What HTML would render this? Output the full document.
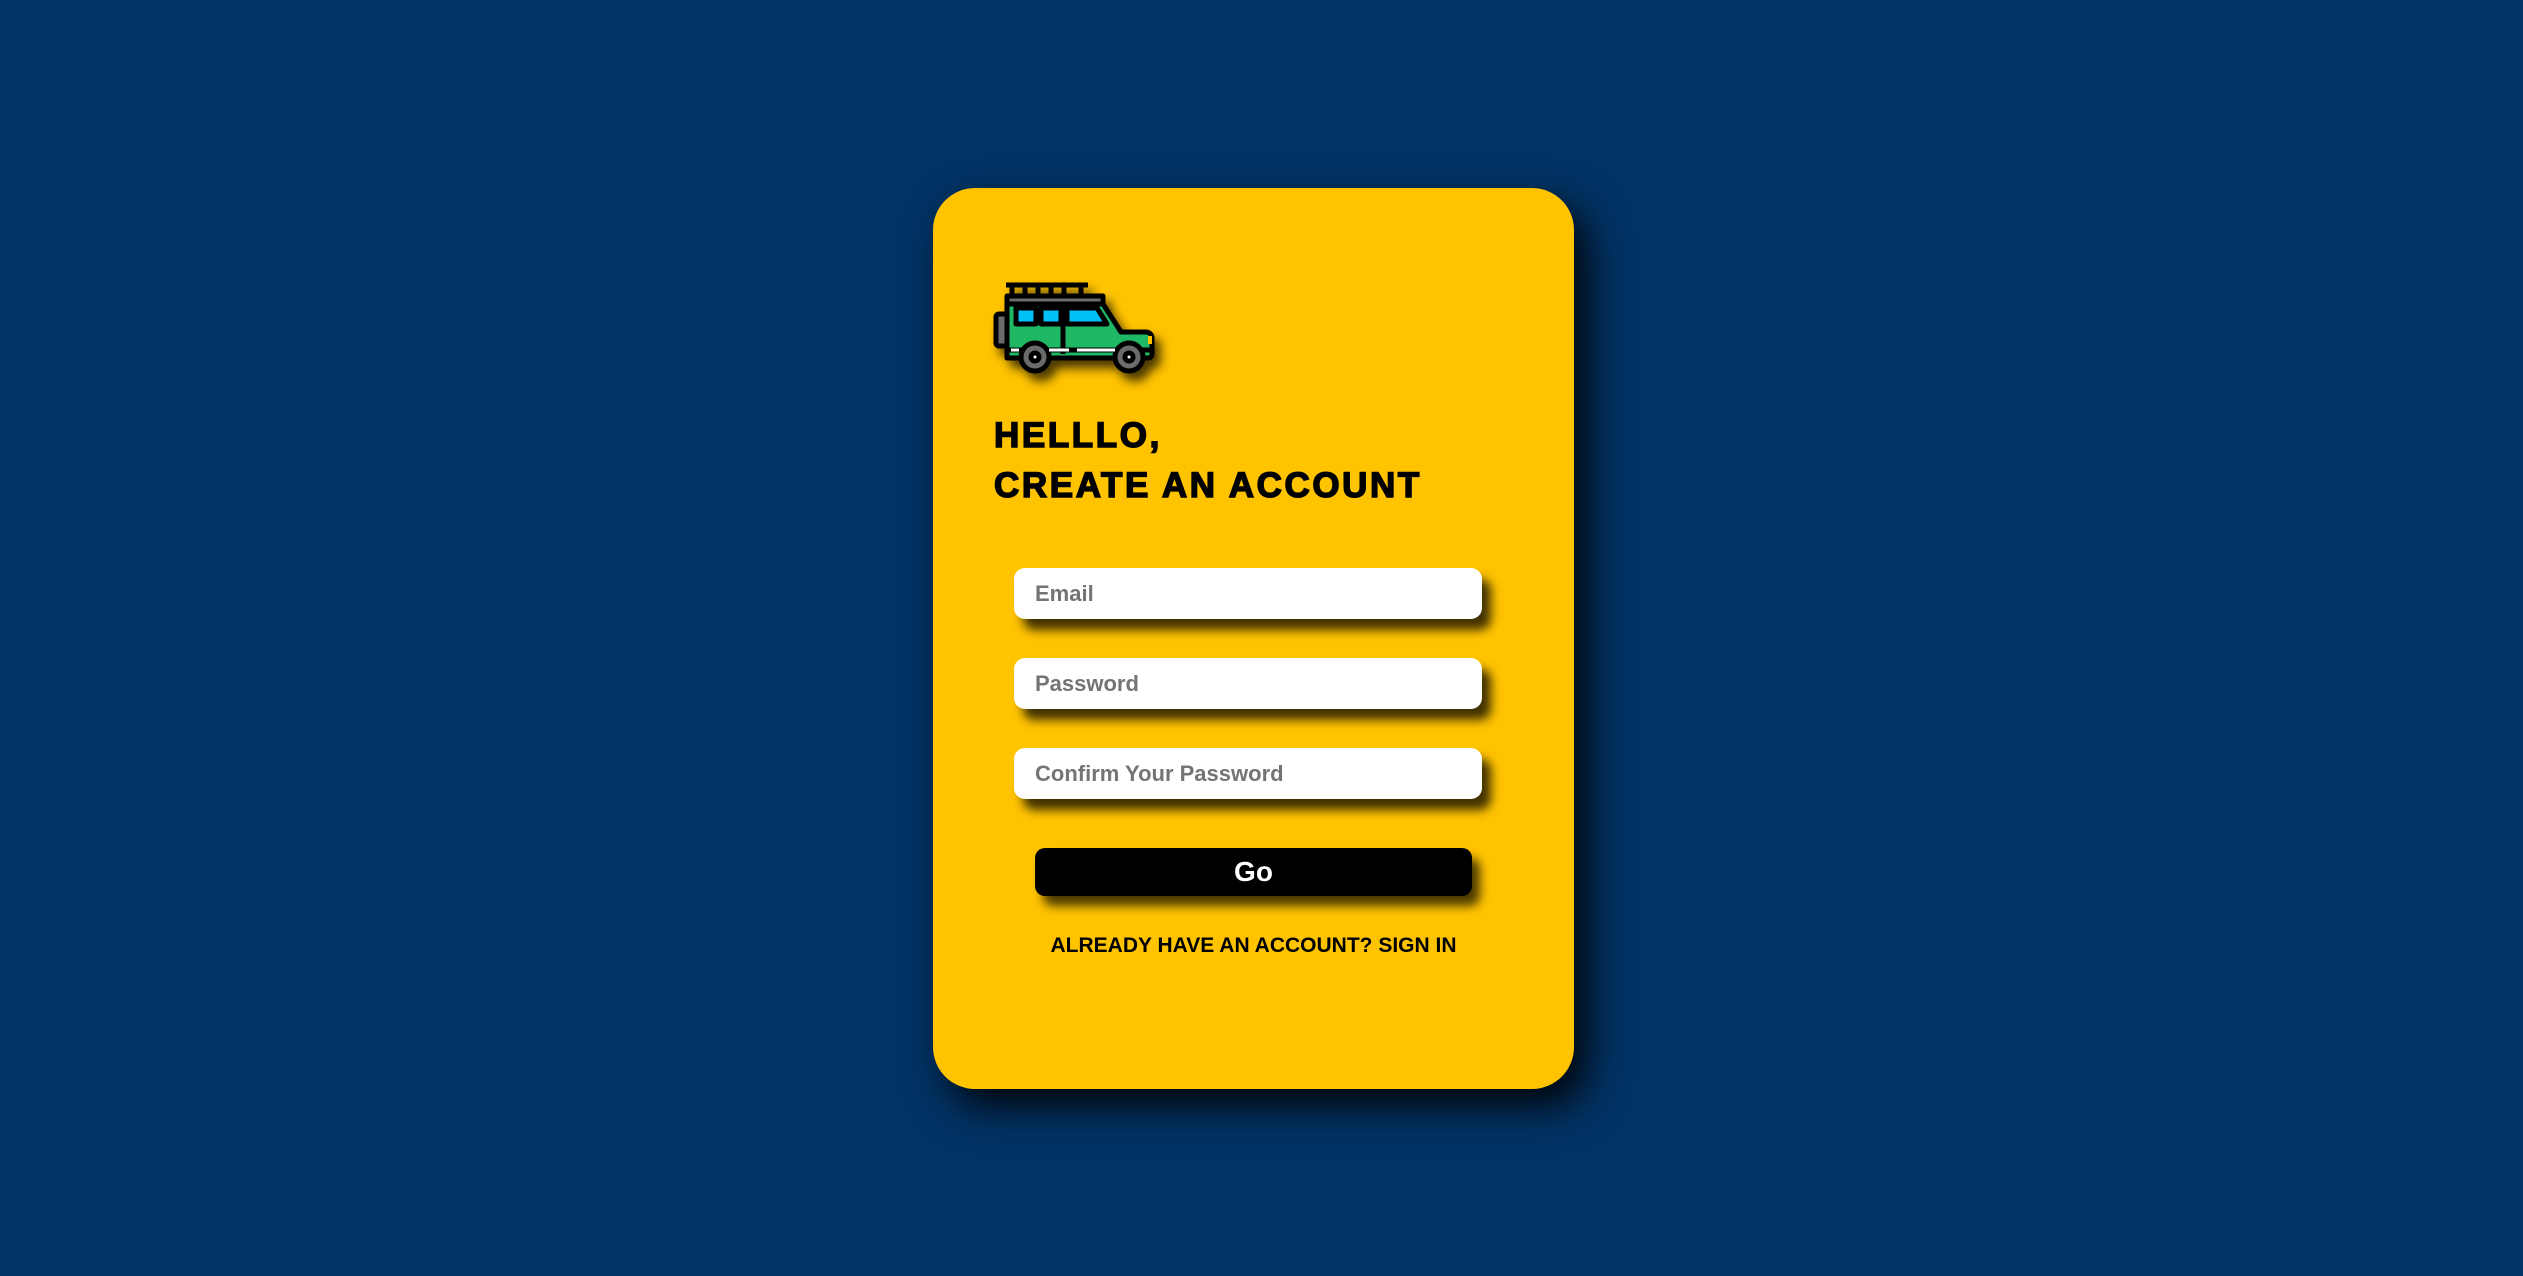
<!DOCTYPE html>
<html><head><meta charset="utf-8"><style>
html,body{margin:0;padding:0;width:2523px;height:1276px;background:#023365;overflow:hidden;font-family:"Liberation Sans",Arial,sans-serif}
.card{position:absolute;left:933px;top:188px;width:641px;height:901px;background:#ffc300;border-radius:42px;box-shadow:14px 18px 40px rgba(0,0,0,.9)}
.jeep{position:absolute;left:993px;top:282px;width:164px;height:96px;filter:drop-shadow(6px 8px 5px rgba(0,0,0,.7))}
h1{position:absolute;left:994px;top:411px;margin:0;font-size:35px;line-height:50px;font-weight:900;color:#000;-webkit-text-stroke:1.5px #000;letter-spacing:2.6px}
.in{position:absolute;left:1014px;width:468px;height:51px;background:#fff;border-radius:11px;box-shadow:9px 11px 10px rgba(0,0,0,.75);font-size:22px;font-weight:bold;color:#747474;line-height:51px;padding-left:21px;box-sizing:border-box}
.btn{position:absolute;left:1035px;top:848px;width:437px;height:48px;background:#000;border-radius:10px;box-shadow:8px 10px 10px rgba(0,0,0,.7);color:#fff;font-weight:bold;font-size:28px;text-align:center;line-height:48px}
.link{position:absolute;left:933px;width:641px;top:934px;text-align:center;font-size:21px;font-weight:bold;color:#000}
</style></head><body>
<div class="card"></div>
<svg class="jeep" viewBox="0 0 164 96">
<g stroke="#000" stroke-width="5" stroke-linejoin="round">
<path d="M13 3H95" />
<path d="M19 3v11M32 3v11M45 3v11M58 3v11M71 3v11M88 3v11"/>
<rect x="14" y="14" width="96" height="8" fill="#6b6b6b"/>
<path d="M14 22H110l18 28h25a6 6 0 0 1 6 6v16a4 4 0 0 1-4 4H14z" fill="#1fb865"/>
<rect x="3" y="32" width="11" height="32" rx="3" fill="#6b6b6b"/>
<rect x="23" y="26" width="20" height="16" fill="#00c0f5"/>
<rect x="48" y="26" width="20" height="16" fill="#00c0f5"/>
<path d="M74 26h30l10 16H74z" fill="#00c0f5"/>
<path d="M70 22v50"/>
<path d="M14 68h146" />
<circle cx="42" cy="75" r="14" fill="#6b6b6b"/><circle cx="42" cy="75" r="4" fill="#fff"/>
<circle cx="136" cy="75" r="14" fill="#6b6b6b"/><circle cx="136" cy="75" r="4" fill="#fff"/>
</g>
<path d="M18 68h8M56 68h20M84 68h38" stroke="#fff" stroke-width="3"/>
<rect x="155" y="54" width="4" height="8" fill="#ffc300"/>
</svg>
<h1>HELLLO,<br>CREATE AN ACCOUNT</h1>
<div class="in" style="top:568px">Email</div>
<div class="in" style="top:658px">Password</div>
<div class="in" style="top:748px">Confirm Your Password</div>
<div class="btn">Go</div>
<div class="link">ALREADY HAVE AN ACCOUNT? SIGN IN</div>
</body></html>
